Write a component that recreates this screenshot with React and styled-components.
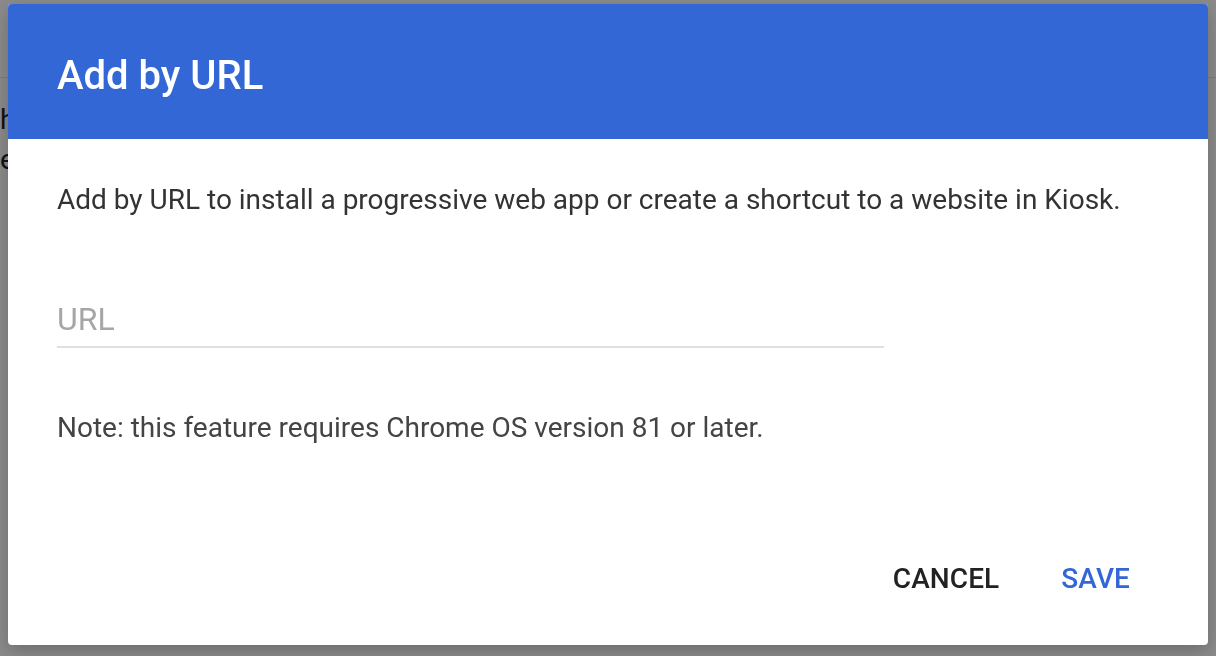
import React from 'react'
import styled, { createGlobalStyle } from 'styled-components'

const GlobalStyle = createGlobalStyle`
	html, body {
		margin: 0;
		padding: 0;
		width: 1216px;
		height: 656px;
		overflow: hidden;
		font-family: Roboto, 'Liberation Sans', sans-serif;
		background: #fff;
	}
`

const Page = styled.div`
	width: 1216px;
	height: 656px;
	background: #fff;
`

const PageTop = styled.div`
	height: 77px;
	border-bottom: 1px solid #e6e6e6;
	overflow: hidden;
	font-size: 30px;
	color: #111;
	line-height: 30px;
	padding-left: 240px;
	.peek {
		display: block;
		margin-top: -31px;
		white-space: nowrap;
	}
`

const PageBody = styled.div`
	padding: 22px 0 0 0;
	font-size: 28px;
	color: #222;
	line-height: 40px;
`

const Overlay = styled.div`
	position: fixed;
	inset: 0;
	background: rgba(0, 0, 0, 0.46);
	padding: 4px 8px 11px;
	display: flex;
`

const Dialog = styled.div`
	flex: 1;
	background: #fff;
	border-radius: 4px;
	overflow: hidden;
	display: flex;
	flex-direction: column;
	box-shadow: 0 6px 18px rgba(0, 0, 0, 0.22);
`

const Header = styled.div`
	height: 135px;
	box-sizing: border-box;
	background: #3367d6;
	padding: 48px 49px 0;
`

const Title = styled.h2`
	margin: 0;
	font-size: 40px;
	line-height: 48px;
	font-weight: 500;
	color: #fff;
`

const Body = styled.div`
	flex: 1;
	padding: 43px 49px 0;
	display: flex;
	flex-direction: column;
`

const Text = styled.p`
	margin: ${(p) => p.$top || 0}px 0 0;
	font-size: 28px;
	line-height: 36px;
	color: ${(p) => p.$color || '#333'};
	white-space: nowrap;
`

const Field = styled.input`
	margin-top: 81px;
	width: 827px;
	box-sizing: border-box;
	border: 0;
	border-bottom: 2px solid #e0e0e0;
	padding: 0 0 7px;
	font-family: inherit;
	font-size: 32px;
	line-height: 40px;
	height: 49px;
	color: #333;
	outline: none;
	background: transparent;
	&::placeholder {
		color: #a6a6a6;
		font-weight: 400;
	}
`

const Actions = styled.div`
	margin-top: auto;
	display: flex;
	justify-content: flex-end;
	gap: 62px;
	padding: 0 29px 46px 0;
`

const Button = styled.button`
	border: 0;
	background: none;
	padding: 0;
	font-family: inherit;
	font-size: 28px;
	line-height: 40px;
	font-weight: 500;
	letter-spacing: 0.1px;
	color: ${(p) => (p.$primary ? '#3367d6' : '#222')};
	cursor: pointer;
`

export default function App() {
	return (
		<>
			<GlobalStyle />
			<Page>
				<PageTop>
					<span className='peek'>pick apps and settings to go with your kiosk setup</span>
				</PageTop>
				<PageBody>
					<div>h</div>
					<div>e</div>
				</PageBody>
			</Page>
			<Overlay>
				<Dialog>
					<Header>
						<Title>Add by URL</Title>
					</Header>
					<Body>
						<Text>Add by URL to install a progressive web app or create a shortcut to a website in Kiosk.</Text>
						<Field placeholder='URL' />
						<Text $top={62} $color='#444'>
							Note: this feature requires Chrome OS version 81 or later.
						</Text>
						<Actions>
							<Button>CANCEL</Button>
							<Button $primary>SAVE</Button>
						</Actions>
					</Body>
				</Dialog>
			</Overlay>
		</>
	)
}
